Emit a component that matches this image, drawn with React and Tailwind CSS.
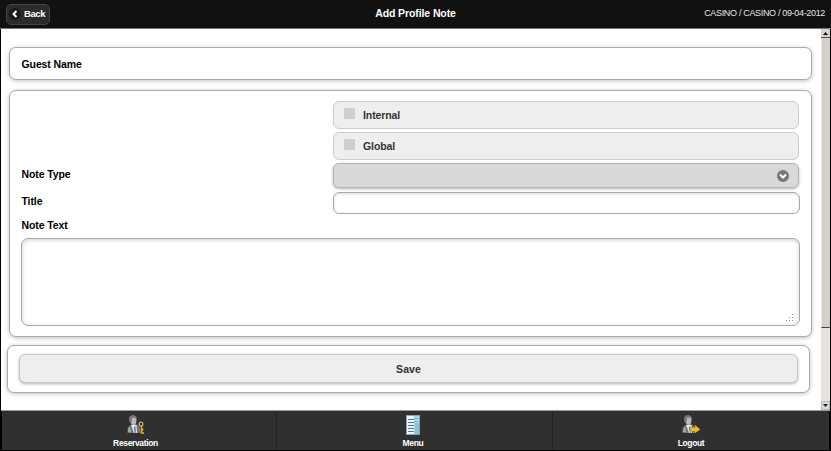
import React from "react";

function Person() {
  return (
    <>
      <path d="M.5 18Q0 12 2.5 11L5 9H9L12 11Q14 13 13.5 18Z" fill="#6f767b" />
      <path d="M1 17Q1 12.5 3 12L4 17Z" fill="#a3abb0" />
      <path d="M4 10L7 18H10L9.5 10Z" fill="#dfe9f2" />
      <path d="M7.2 11.5L6.8 14L8 18H9L8.6 11.5Z" fill="#5f87a8" />
      <path d="M2.5 3Q3 .5 6 .5Q9.5 .5 9.5 4Q9.5 9.8 6.8 10Q3 9.8 2.5 3Z" fill="#bdb7b0" />
      <path d="M2.5 7Q.8 .3 5.5 .2Q9.5 .1 9.6 4L8 2.8H5L4.4 8Z" fill="#777572" />
    </>
  );
}

function ReservationIcon() {
  return (
    <svg width="18" height="19" viewBox="0 0 18 19">
      <Person />
      <circle cx="14" cy="9" r="1.9" fill="none" stroke="#c9b277" strokeWidth="1.2" />
      <path d="M14.6 11V18H17M14.6 14.5H16.5" fill="none" stroke="#f2ac1b" strokeWidth="1.5" />
    </svg>
  );
}

function MenuIcon() {
  return (
    <svg width="14" height="20" viewBox="0 0 14 20">
      <path d="M0 0H14V20H0Z" fill="#8fa3ad" />
      <path d="M1 1H13V19H1Z" fill="#a9d8ec" />
      <path d="M1 1H8V19H1Z" fill="#eaf4f9" />
      <path d="M9 8H13V19H9Z" fill="#85c3de" />
      <path d="M2 4.5H8M2 7.5H8M2 10.5H8M2 13.5H8M2 16.5H8" stroke="#5f7684" />
      <path d="M8 3.5H12M8 6.5H12" stroke="#74b1cc" />
    </svg>
  );
}

function LogoutIcon() {
  return (
    <svg width="18" height="19" viewBox="0 0 18 19">
      <Person />
      <path d="M8.5 12.7H13V10L18 14.4L13 18V16H8.5Z" fill="#fbb919" stroke="#c98a12" strokeWidth=".5" />
    </svg>
  );
}

const panel = "shrink-0 rounded-[7px] border border-[#aaa] bg-white shadow-[0_1px_4px_rgba(0,0,0,0.25)]";

function CheckRow({ label }) {
  return (
    <div className="flex h-[28px] w-[466px] items-center rounded-md border border-[#ccc] bg-[#eee] pl-[10px]">
      <span className="mb-[4px] size-[11px] rounded-[1px] bg-[#cfcfcf]" />
      <span className="ml-2 text-[#333]">{label}</span>
    </div>
  );
}

function FooterItem({ label, children, className }) {
  return (
    <div className={"flex h-full flex-col items-center " + className}>
      <div className="flex h-[26px] items-center pt-px">{children}</div>
      <span className="text-[8.5px] leading-[12px] tracking-[-0.35px]">{label}</span>
    </div>
  );
}

export default function App() {
  return (
    <div className="flex h-[451px] w-[831px] flex-col overflow-hidden bg-black font-['Liberation_Sans',Arial,sans-serif] text-[10.5px] font-bold leading-[14px] tracking-[-0.1px]">
      <header className="grid h-[29px] shrink-0 grid-cols-[1fr_auto_1fr] items-center border-b border-[#777] bg-[#111] px-[6px] text-white">
        <button className="flex h-[21px] w-[44px] items-center rounded-[5px] border border-[#444] bg-[#2b2b2b] pl-[2px] text-[9.5px] tracking-[-0.4px]">
          <svg width="12" height="12" viewBox="0 0 12 12">
            <circle cx="6" cy="6" r="6" fill="#191919" />
            <path d="M7.5 3L4.5 6L7.5 9" fill="none" stroke="white" strokeWidth="2" />
          </svg>
          <span className="ml-[3px]">Back</span>
        </button>
        <h1 className="pb-[2px]">Add Profile Note</h1>
        <span className="justify-self-end pb-[2px] text-[9px] font-normal tracking-[-0.33px] text-[#e5e5e5]">CASINO / CASINO / 09-04-2012</span>
      </header>
      <div className="mx-px flex h-[382px] shrink-0 border-b border-[#999] bg-white">
        <main className="flex min-w-0 flex-1 flex-col items-start pl-[8px] pt-[18px]">
          <section className={panel + " flex h-[33px] w-[803px] items-center pl-[11.5px]"}>Guest Name</section>
          <section className={panel + " mt-[10px] h-[247px] w-[803px] px-[11px] pt-[9px]"}>
            <div className="grid h-[114px] grid-cols-[312px_467px] grid-rows-[28px_28px_25px_22px] content-start gap-y-[3px] pt-px">
              <span /><CheckRow label="Internal" />
              <span /><CheckRow label="Global" />
              <label className="pl-[0.5px] pt-[4px]">Note Type</label>
              <div className="flex h-[25px] w-[466px] items-center justify-end rounded-md border border-[#b5b5b5] bg-[#d9d9d9] pr-[9px] shadow-[0_1px_3px_rgba(0,0,0,0.3)]">
                <svg width="12" height="12" viewBox="0 0 12 12">
                  <circle cx="6" cy="6" r="6" fill="#777" />
                  <path d="M3 4.5L6 7.5L9 4.5" fill="none" stroke="white" strokeWidth="2" />
                </svg>
              </div>
              <label className="pl-[0.5px] pt-[3px]">Title</label>
              <div className="mt-px h-[22px] w-[467px] rounded-md border border-[#aaa] shadow-[inset_0_1px_3px_rgba(0,0,0,0.15)]" />
            </div>
            <label className="block pl-[0.5px] pt-[4px]">Note Text</label>
            <div className="mt-[6px] flex h-[88px] w-[779px] items-end justify-end rounded-[7px] border border-[#aaa] pb-[4px] pr-[5px] shadow-[inset_0_1px_4px_rgba(0,0,0,0.2)]">
              <svg width="8" height="7" viewBox="0 0 8 7"><path d="M6 .5H7M3 3.5H4M6 3.5H7M0 6.5H1M3 6.5H4M6 6.5H7" stroke="#888" /></svg>
            </div>
          </section>
          <section className={panel + " -ml-[2px] mt-[8px] h-[48px] w-[803px] px-[11px] pt-[8px]"}>
            <button className="block h-[29px] w-[779px] rounded-md border border-[#c6c6c6] bg-[#eee] text-[10.5px] tracking-[0.1px] text-[#333] shadow-[0_1px_3px_rgba(0,0,0,0.3)]">Save</button>
          </section>
        </main>
        <div className="flex w-[9px] shrink-0 flex-col bg-[#e7e4df]">
          <div className="flex h-[9px] shrink-0 items-center justify-center border-b border-[#555] bg-[#d8d3cc]"><svg width="5" height="3"><path d="M0 3L2.5 0L5 3Z" fill="#111" /></svg></div>
          <div className="h-[290px] shrink-0 border-b border-l border-b-[#444] border-l-[#eee] bg-[#d4cec7]" />
          <div className="flex-1" />
          <div className="flex h-[9px] shrink-0 items-center justify-center border border-[#bbb] bg-[#ddd9d2]"><svg width="5" height="3"><path d="M0 0H5L2.5 3Z" fill="#111" /></svg></div>
        </div>
      </div>
      <footer className="mx-[2px] flex h-[39px] shrink-0 bg-[#303030] text-white">
        <FooterItem label="Reservation" className="w-[275px] border-r border-[#222] pr-[7px]"><ReservationIcon /></FooterItem>
        <FooterItem label="Menu" className="w-[276px] border-r border-[#222] pr-[3px]"><MenuIcon /></FooterItem>
        <FooterItem label="Logout" className="flex-1"><LogoutIcon /></FooterItem>
      </footer>
    </div>
  );
}
